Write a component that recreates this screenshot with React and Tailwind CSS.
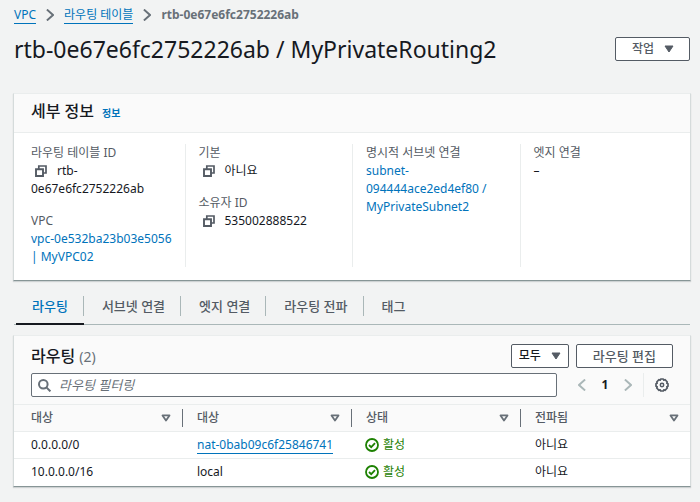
import clsx from "clsx";
import { useState } from "react";

const tabs = ["라우팅", "서브넷 연결", "엣지 연결", "라우팅 전파", "태그"];
const columns = ["대상", "대상", "상태", "전파됨"];
const routes = [
  { destination: "0.0.0.0/0", target: "nat-0bab09c6f25846741", link: true, status: "활성", propagated: "아니요" },
  { destination: "10.0.0.0/16", target: "local", link: false, status: "활성", propagated: "아니요" },
];

export default function App() {
  const [tab, setTab] = useState(0);
  const [filter, setFilter] = useState("");
  const rows = routes.filter((route) => `${route.destination} ${route.target}`.includes(filter.trim()));

  return (
    <main className="min-h-screen bg-[#f2f3f3] px-[9px] pt-1.5 pb-4 pl-[13px] font-['Noto_Sans','Noto_Sans_CJK_KR',sans-serif] text-xs leading-[18px] text-[#16191f]">
      <nav aria-label="Breadcrumb" className="flex items-center gap-2.5 pl-px">
        <a href="#vpc" className="border-b border-[#0073bb] leading-4 text-[#0073bb]">VPC</a>
        <ChevronIcon className="h-3 w-2 text-[#687078]" />
        <a href="#tables" className="border-b border-[#0073bb] leading-4 text-[#0073bb]">라우팅 테이블</a>
        <ChevronIcon className="h-3 w-2 text-[#687078]" />
        <span className="font-bold text-[#687078]">rtb-0e67e6fc2752226ab</span>
      </nav>

      <div className="mt-2.5 flex items-center justify-between pr-px pl-px">
        <h1 className="text-[23px] leading-[30px]">rtb-0e67e6fc2752226ab / MyPrivateRouting2</h1>
        <button type="button" className="flex h-6 items-center gap-2.5 rounded-xs border border-[#545b64] bg-white pr-[15px] pl-4 text-xs font-medium text-[#545b64]">
          작업
          <CaretIcon />
        </button>
      </div>

      <Panel className="mt-[29px]">
        <div className="flex items-center gap-2 border-b border-[#eaeded] bg-[#fafafa] px-[17px] pt-1.5 pb-2.5">
          <h2 className="text-base leading-[22px] font-medium">세부 정보</h2>
          <a href="#info" className="pt-1 text-[10px] font-bold text-[#0073bb]">정보</a>
        </div>
        <div className="grid grid-cols-4 px-[3px] pt-[11px] pb-[13px]">
          <DetailColumn first>
            <Detail label="라우팅 테이블 ID"><CopyButton />rtb-<br />0e67e6fc2752226ab</Detail>
            <Detail label="VPC">
              <a href="#vpc" className="text-[#0073bb]">vpc-0e532ba23b03e5056<br />| MyVPC02</a>
            </Detail>
          </DetailColumn>
          <DetailColumn>
            <Detail label="기본"><CopyButton />아니요</Detail>
            <Detail label="소유자 ID"><CopyButton />535002888522</Detail>
          </DetailColumn>
          <DetailColumn>
            <Detail label="명시적 서브넷 연결">
              <a href="#subnet" className="text-[#0073bb]">subnet-<br />094444ace2ed4ef80 /<br />MyPrivateSubnet2</a>
            </Detail>
          </DetailColumn>
          <DetailColumn>
            <Detail label="엣지 연결">–</Detail>
          </DetailColumn>
        </div>
      </Panel>

      <div role="tablist" className="mt-[11px] mr-px ml-px flex border-b border-[#aab7b8]">
        {tabs.map((name, index) => (
          <button
            key={name}
            type="button"
            role="tab"
            aria-selected={tab === index}
            onClick={() => setTab(index)}
            className={clsx(
              "-mb-px border-b-2 pt-1 pb-[7px] text-[13px] leading-5 font-medium",
              index === 0 && "ml-0.5",
              tab === index ? "border-[#16191f] font-bold text-[#0073bb]" : "border-transparent text-[#545b64]",
            )}
          >
            <span className={clsx("block pr-[15px]", index === 0 ? "pl-4" : "pl-[18px]", index < tabs.length - 1 && "border-r border-[#aab7b8]")}>{name}</span>
          </button>
        ))}
      </div>

      <Panel className="mt-2.5">
        <div className="bg-[#fafafa] px-[17px] pt-2 pb-[7px]">
          <div className="flex items-center gap-[7px]">
            <h2 className="mr-auto text-base leading-[22px] font-medium">
              라우팅 <span className="text-sm font-normal text-[#687078]">(2)</span>
            </h2>
            <div className="relative">
              <select aria-label="라우팅 범위" className="block h-6 w-[58px] appearance-none rounded-xs border border-[#545b64] bg-white pl-[7px] text-xs font-medium">
                <option>모두</option>
              </select>
              <CaretIcon className="pointer-events-none absolute top-2 right-2 text-[#545b64]" />
            </div>
            <button type="button" className="h-6 rounded-xs border border-[#545b64] bg-white px-4 text-[13px] font-medium text-[#545b64]">라우팅 편집</button>
          </div>
          <div className="mt-[5px] flex items-center">
            <label className="flex h-6 flex-1 items-center gap-2 rounded-xs border border-[#687078] bg-white pl-1.5">
              <SearchIcon />
              <input
                type="text"
                value={filter}
                onChange={(event) => setFilter(event.target.value)}
                placeholder="라우팅 필터링"
                aria-label="라우팅 필터링"
                className="min-w-0 flex-1 text-[13px] leading-5 outline-none placeholder:text-[#687078] placeholder:italic"
              />
            </label>
            <div className="flex h-6 items-center border-r border-[#eaeded] pr-[11px] pl-[21px]">
              <button type="button" aria-label="이전 페이지"><ChevronIcon className="h-3 w-2 rotate-180 text-[#aab7b8]" /></button>
              <span className="w-[38px] text-center font-bold">1</span>
              <button type="button" aria-label="다음 페이지"><ChevronIcon className="h-3 w-2 text-[#aab7b8]" /></button>
            </div>
            <button type="button" aria-label="설정" className="pr-1 pl-[11px] text-[#545b64]"><GearIcon /></button>
          </div>
        </div>

        <table className="w-full table-fixed border-collapse text-left">
          <thead className="bg-[#fafafa] text-[#545b64]">
            <tr className="h-[27px] border-y border-[#eaeded]">
              {columns.map((name, index) => (
                <th key={index} scope="col" className="p-0 font-medium">
                  <div className={clsx("flex items-center justify-between pr-[11px]", index === 0 ? "pl-[17px]" : "pl-3.5", index < columns.length - 1 && "border-r border-[#687078]")}>
                    {name}
                    <SortIcon />
                  </div>
                </th>
              ))}
            </tr>
          </thead>
          <tbody>
            {rows.map((route) => (
              <tr key={route.destination} className="h-[27px] border-b border-[#eaeded] last:border-b-0">
                <td className="p-0 pl-[17px]">{route.destination}</td>
                <td className="p-0 pl-3.5">
                  {route.link ? <a href="#nat" className="inline-block border-b border-[#0073bb] leading-4 text-[#0073bb]">{route.target}</a> : route.target}
                </td>
                <td className="p-0 pl-[13px]">
                  <span className="flex items-center gap-1 text-[#1d8102]"><CheckIcon />{route.status}</span>
                </td>
                <td className="p-0 pl-3.5">{route.propagated}</td>
              </tr>
            ))}
          </tbody>
        </table>
      </Panel>
    </main>
  );
}

function Panel({ className, children }) {
  return (
    <section className={clsx("border border-x-[#d5dbdb] border-t-[#eaeded] border-b-[#879596] bg-white shadow-[0_1px_1px_rgba(0,28,36,0.15)]", className)}>
      {children}
    </section>
  );
}

function DetailColumn({ first, children }) {
  return <dl className={clsx("flex flex-col gap-3.5 pb-px", first ? "pl-3.5" : "border-l border-[#eaeded] pl-[13px]")}>{children}</dl>;
}

function Detail({ label, children }) {
  return (
    <div>
      <dt className="text-[#545b64]">{label}</dt>
      <dd>{children}</dd>
    </div>
  );
}

// two stacked sheets, the front one at the lower left
function CopyButton() {
  return (
    <button type="button" aria-label="복사" className="mr-2.5 ml-1 align-[-2px] text-[#545b64]">
      <svg viewBox="0 0 12 12" className="block h-3 w-3" fill="none" stroke="currentColor">
        <path d="M1 4.2h7V11H1z" strokeWidth="1.9" />
        <path d="M3.8 4V1H11v7H8" strokeWidth="1.7" />
      </svg>
    </button>
  );
}

function ChevronIcon({ className }) {
  return (
    <svg viewBox="0 0 8 12" className={clsx("block", className)} fill="none" stroke="currentColor" strokeWidth="1.9">
      <path d="M.9.5 7 6 .9 11.5" />
    </svg>
  );
}

function CaretIcon({ className }) {
  return (
    <svg viewBox="0 0 10 8" className={clsx("block h-2 w-2.5", className)} fill="currentColor" stroke="currentColor" strokeLinejoin="round">
      <path d="M1 1h8L5 7z" />
    </svg>
  );
}

function SortIcon() {
  return (
    <svg viewBox="0 0 10 8" className="h-2 w-2.5" fill="none" stroke="#687078" strokeWidth="1.8" strokeLinejoin="round">
      <path d="M1.5 1.4h7L5 6.5z" />
    </svg>
  );
}

function SearchIcon() {
  return (
    <svg viewBox="0 0 13 13" className="h-[13px] w-[13px]" fill="none" stroke="#687078" strokeWidth="2">
      <circle cx="5.3" cy="5.3" r="4.3" />
      <path d="m8.4 8.4 4 4" />
    </svg>
  );
}

function CheckIcon() {
  return (
    <svg viewBox="0 0 14 14" className="h-3.5 w-3.5" fill="none" stroke="currentColor" strokeWidth="1.8">
      <circle cx="7" cy="7" r="6" />
      <path d="m4 7 2.2 2.2L10 5.2" />
    </svg>
  );
}

function GearIcon() {
  return (
    <svg viewBox="0 0 14 14" className="block h-3.5 w-3.5" fill="none" stroke="currentColor" strokeLinejoin="round">
      <path d="M5.7 1h2.6l.5 1.2L10 1.7 12.3 4l-.5 1.2 1.2.5v2.6l-1.2.5.5 1.2-2.3 2.3-1.2-.5-.5 1.2H5.7l-.5-1.2-1.2.5L1.7 10l.5-1.2L1 8.3V5.7l1.2-.5L1.7 4 4 1.7l1.2.5z" strokeWidth="1.7" />
      <circle cx="7" cy="7" r="1.7" strokeWidth="1.5" />
    </svg>
  );
}
